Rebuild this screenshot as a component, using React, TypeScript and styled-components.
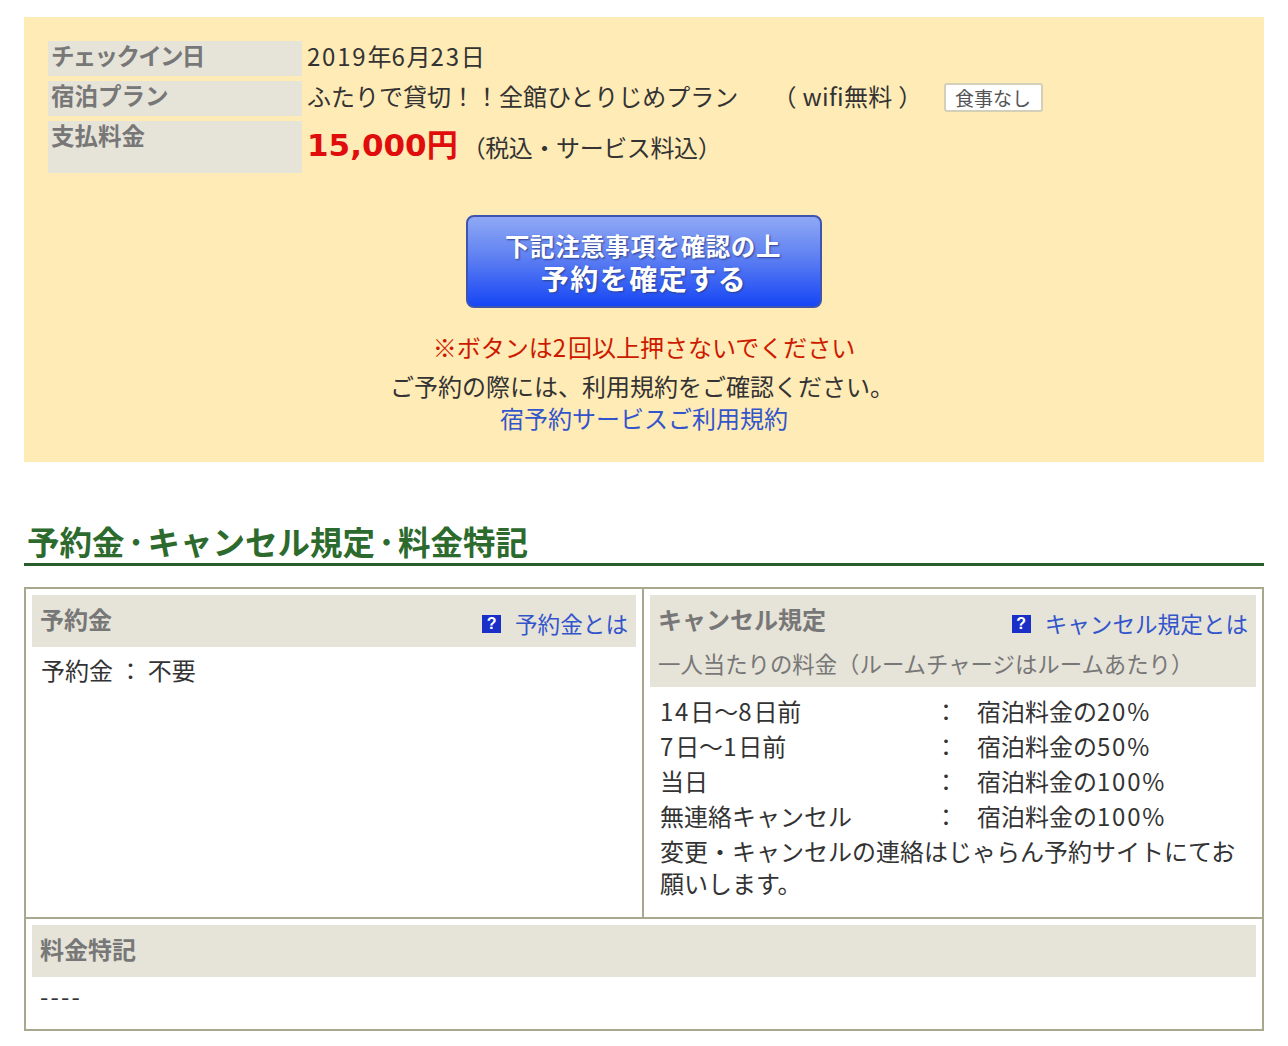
import React from "react";
import styled, { createGlobalStyle } from "styled-components";

const Global = createGlobalStyle`
  html, body { margin: 0; padding: 0; background: #fff; }
  body { font-family: "Noto Sans CJK JP", "Liberation Sans", sans-serif; color: #333; font-size: 24px; }
`;

const Page = styled.div`
  width: 1288px;
  height: 1046px;
  padding: 17px 24px 0;
  box-sizing: border-box;
  overflow: hidden;
`;

const Num = styled.span`
  letter-spacing: 1.8px;
`;

const Confirm = styled.section`
  height: 445px;
  background: #ffebb6;
  padding: 24px 24px 0;
  box-sizing: border-box;
  display: flex;
  flex-direction: column;
`;

const Info = styled.div`
  display: grid;
  grid-template-columns: 254px 1fr;
  grid-template-rows: 35px 35px 52px;
  row-gap: 5px;
`;

const Label = styled.div<{ $tight?: boolean }>`
  background: #e6e3d8;
  color: #777;
  font-weight: 700;
  font-size: 23.5px;
  line-height: 28px;
  padding-left: 3px;
  letter-spacing: ${(p) => (p.$tight ? "-1.7px" : "0")};
`;

const Value = styled.div`
  padding-left: 5px;
  font-size: 24px;
  line-height: 30px;
  display: flex;
  align-items: flex-start;
  white-space: nowrap;
`;

const PriceValue = styled(Value)`
  line-height: 48px;
`;

const Price = styled.span`
  color: #e00d0d;
  font-size: 31px;
  font-weight: 700;
  font-family: "DejaVu Sans", "Noto Sans CJK JP", sans-serif;
  margin-right: 4px;
`;

const Tax = styled.span`
  font-size: 24px;
  line-height: 52px;
  letter-spacing: -0.4px;
`;

const PlanNote = styled.span`
  margin-left: 22px;
  letter-spacing: 0.3px;
`;

const Badge = styled.span`
  margin-left: 21px;
  width: 99px;
  height: 29px;
  margin-top: 2px;
  box-sizing: border-box;
  border: 2px solid #d4cfb8;
  border-radius: 3px;
  background: #fff;
  color: #555;
  font-size: 19px;
  line-height: 25px;
  text-align: center;
`;

const SubmitButton = styled.button`
  align-self: center;
  margin-top: 42px;
  width: 356px;
  height: 93px;
  border: 2px solid #3d55b0;
  border-radius: 8px;
  background: linear-gradient(#8fa9f5 0%, #5f80f2 45%, #1646f5 100%);
  color: #fff;
  font-family: inherit;
  font-weight: 700;
  padding: 0;
  display: flex;
  flex-direction: column;
  align-items: center;
  justify-content: center;
  gap: 0;
  text-shadow: 1px 1px 2px #2a3f90;
`;

const ButtonSmall = styled.span`
  font-size: 24.5px;
  line-height: 32px;
  letter-spacing: 0.6px;
  margin-right: 2px;
`;

const ButtonLarge = styled.span`
  font-size: 28px;
  line-height: 32px;
  letter-spacing: 1.5px;
`;

const Warning = styled.p`
  margin: 22px 0 0;
  color: #cc1a00;
  font-size: 24px;
  line-height: 34px;
  text-align: center;
`;

const Notice = styled.p`
  margin: 6px 4px 0 0;
  font-size: 24px;
  line-height: 32px;
  text-align: center;
`;

const TermsLink = styled.a`
  color: #3355cc;
  font-size: 24px;
  line-height: 32px;
  text-align: center;
`;

const Heading = styled.h2`
  margin: 56px 0 0;
  height: 45px;
  border-bottom: 3px solid #2a5e2a;
  color: #2d6a2d;
  font-size: 32.5px;
  line-height: 46px;
  font-weight: 700;
  padding-left: 3px;
  white-space: nowrap;
`;

const HeadingDot = styled.span`
  font-size: 23px;
  font-weight: 900;
  vertical-align: 4px;
`;

const Table = styled.div`
  margin-top: 21px;
  border: 2px solid #aaa78f;
  height: 444px;
  box-sizing: border-box;
  display: grid;
  grid-template-columns: 618px 1fr;
  grid-template-rows: 330px 1fr;
`;

const Cell = styled.div`
  padding: 6px;
  box-sizing: border-box;
`;

const LeftCell = styled(Cell)`
  border-right: 2px solid #aaa78f;
  border-bottom: 2px solid #aaa78f;
`;

const RightCell = styled(Cell)`
  border-bottom: 2px solid #aaa78f;
`;

const WideCell = styled(Cell)`
  grid-column: 1 / span 2;
`;

const Head = styled.div`
  background: #e6e3d8;
  padding: 0 8px;
`;

const HeadRow = styled.div`
  height: 52px;
  padding-bottom: 5px;
  box-sizing: border-box;
  display: flex;
  justify-content: space-between;
  align-items: center;
`;

const HeadTitle = styled.span`
  color: #777;
  font-weight: 700;
  font-size: 24px;
  line-height: 34px;
`;

const HelpLink = styled.a`
  color: #3355cc;
  font-size: 22.6px;
  display: flex;
  align-items: center;
  gap: 14px;
  margin-top: 9px;
`;

const HelpIcon = styled.span`
  width: 19px;
  height: 18px;
  margin-top: 2px;
  background: #1a2fc8;
  color: #fff;
  font-size: 16px;
  font-weight: 700;
  line-height: 18px;
  text-align: center;
  font-family: "Liberation Sans", sans-serif;
`;

const SubNote = styled.div`
  color: #777;
  font-size: 22.4px;
  line-height: 33px;
  padding-bottom: 7px;
  white-space: nowrap;
`;

const Body = styled.div`
  padding: 6px 9px 0;
  line-height: 34px;
`;

const RightBody = styled(Body)`
  padding-left: 10px;
`;

const NoteBody = styled(Body)`
  padding: 2px 8px 0;
  letter-spacing: 2.2px;
`;

const RateRow = styled.div`
  display: grid;
  grid-template-columns: 274px 43px 1fr;
  height: 35px;
  line-height: 35px;
  white-space: nowrap;
`;

const Plain = styled.div`
  margin-top: 2px;
  line-height: 32px;
`;

const Help = ({ children }: { children: React.ReactNode }) => (
  <HelpLink>
    <HelpIcon>?</HelpIcon>
    {children}
  </HelpLink>
);

const rates = [
  [<><Num>14</Num>日～<Num>8</Num>日前</>, <>宿泊料金の<Num>20%</Num></>],
  [<><Num>7</Num>日～<Num>1</Num>日前</>, <>宿泊料金の<Num>50%</Num></>],
  [<>当日</>, <>宿泊料金の<Num>100%</Num></>],
  [<>無連絡キャンセル</>, <>宿泊料金の<Num>100%</Num></>],
];

export default function App() {
  return (
    <Page>
      <Global />
      <Confirm>
        <Info>
          <Label $tight>チェックイン日</Label>
          <Value>
            <span><Num>2019</Num>年<Num>6</Num>月<Num>23</Num>日</span>
          </Value>
          <Label>宿泊プラン</Label>
          <Value>
            <span>ふたりで貸切！！全館ひとりじめプラン</span>
            <PlanNote>　（ wifi無料 ）</PlanNote>
            <Badge>食事なし</Badge>
          </Value>
          <Label>支払料金</Label>
          <PriceValue>
            <Price>15,000円</Price>
            <Tax>（税込・サービス料込）</Tax>
          </PriceValue>
        </Info>
        <SubmitButton>
          <ButtonSmall>下記注意事項を確認の上</ButtonSmall>
          <ButtonLarge>予約を確定する</ButtonLarge>
        </SubmitButton>
        <Warning>※ボタンは<Num>2</Num>回以上押さないでください</Warning>
        <Notice>ご予約の際には、利用規約をご確認ください。</Notice>
        <TermsLink>宿予約サービスご利用規約</TermsLink>
      </Confirm>
      <Heading>
        予約金<HeadingDot>・</HeadingDot>キャンセル規定<HeadingDot>・</HeadingDot>料金特記
      </Heading>
      <Table>
        <LeftCell>
          <Head>
            <HeadRow>
              <HeadTitle>予約金</HeadTitle>
              <Help>予約金とは</Help>
            </HeadRow>
          </Head>
          <Body>予約金 ： 不要</Body>
        </LeftCell>
        <RightCell>
          <Head>
            <HeadRow>
              <HeadTitle>キャンセル規定</HeadTitle>
              <Help>キャンセル規定とは</Help>
            </HeadRow>
            <SubNote>一人当たりの料金（ルームチャージはルームあたり）</SubNote>
          </Head>
          <RightBody>
            {rates.map(([a, b], i) => (
              <RateRow key={i}>
                <span>{a}</span>
                <span>：</span>
                <span>{b}</span>
              </RateRow>
            ))}
            <Plain>変更・キャンセルの連絡はじゃらん予約サイトにてお願いします。</Plain>
          </RightBody>
        </RightCell>
        <WideCell>
          <Head>
            <HeadRow>
              <HeadTitle>料金特記</HeadTitle>
            </HeadRow>
          </Head>
          <NoteBody>----</NoteBody>
        </WideCell>
      </Table>
    </Page>
  );
}
